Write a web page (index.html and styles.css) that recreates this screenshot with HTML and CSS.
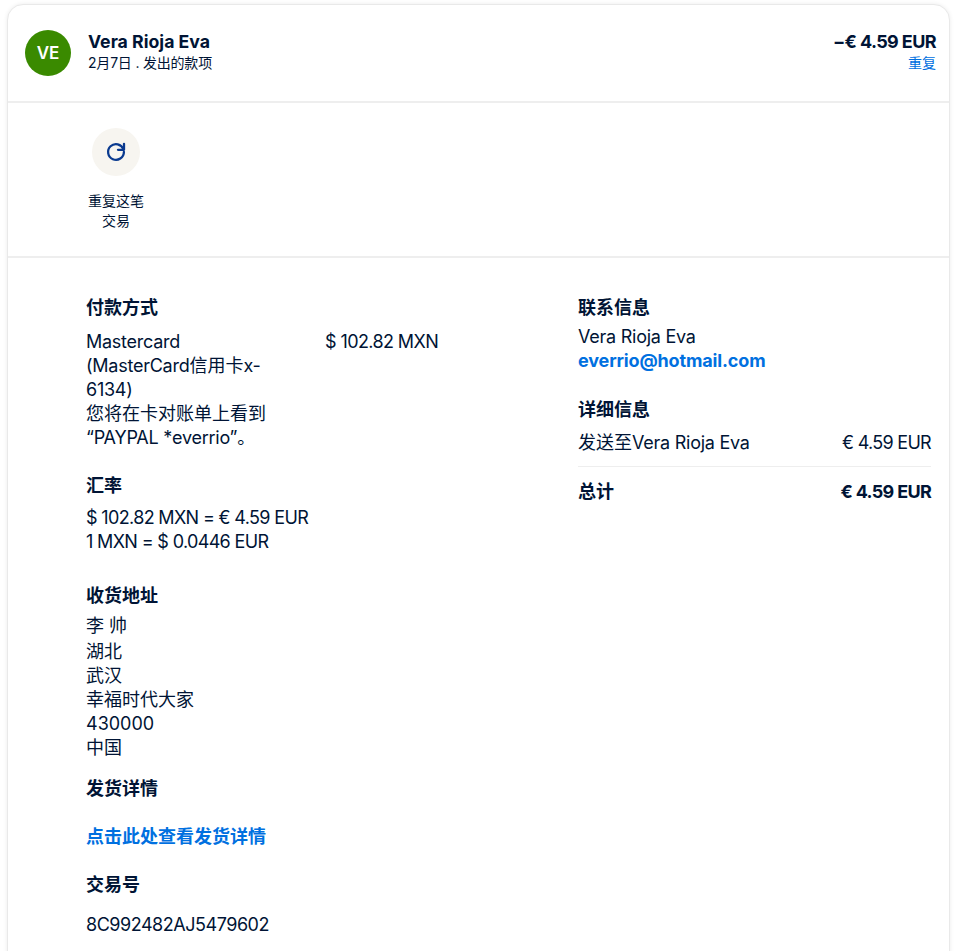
FILE: index.html
```html
<!DOCTYPE html>
<html lang="zh-CN">
<head>
<meta charset="utf-8">
<title>Vera Rioja Eva</title>
<link rel="stylesheet" href="styles.css">
</head>
<body>
<main class="card">
  <header class="head">
    <div class="avatar">VE</div>
    <div class="who">
      <div class="name">Vera Rioja Eva</div>
      <div class="sub">2月7日 . 发出的款项</div>
    </div>
    <div class="sum">
      <div class="total">−€ 4.59 EUR</div>
      <a class="repeat" href="#">重复</a>
    </div>
  </header>
  <section class="actions">
    <a class="action" href="#">
      <span class="action-icon">
        <svg width="24" height="24" viewBox="0 0 24 24" fill="none" stroke="#0a3a8f" stroke-width="2.3" stroke-linecap="round" stroke-linejoin="round"><path d="M19.4 9.2A7.9 7.9 0 1 0 19.9 12"/><path d="M20 3.8v6h-6"/></svg>
      </span>
      <span class="action-label">重复这笔<br>交易</span>
    </a>
  </section>
  <section class="details">
    <div class="col-left">
      <h3 class="title">付款方式</h3>
      <div class="pay-row">
        <div class="pay-text"><span class="tight">Mastercard</span><br><span class="tight">(MasterCard</span>信用卡<span class="tight">x-</span><br><span class="tight">6134)</span><br>您将在卡对账单上看到<br><span class="tight">“PAYPAL *everrio”</span>。</div>
        <div class="num">$ 102.82 MXN</div>
      </div>
      <h3 class="title rate-title">汇率</h3>
      <div class="rate num">$ 102.82 MXN = € 4.59 EUR<br>1 MXN = $ 0.0446 EUR</div>
      <h3 class="title addr-title">收货地址</h3>
      <div class="addr-name">李 帅</div>
      <div class="addr">湖北<br>武汉<br>幸福时代大家<br>430000<br>中国</div>
      <h3 class="title ship-title">发货详情</h3>
      <a class="link ship-link" href="#">点击此处查看发货详情</a>
      <h3 class="title txn-title">交易号</h3>
      <div class="txn">8C992482AJ5479602</div>
    </div>
    <div class="col-right">
      <h3 class="title">联系信息</h3>
      <div class="contact"><span class="tight">Vera Rioja Eva</span><br><a class="link email" href="#">everrio@hotmail.com</a></div>
      <h3 class="title detail-title">详细信息</h3>
      <div class="line">
        <span>发送至<span class="tight">Vera Rioja Eva</span></span>
        <span class="amount">€ 4.59 EUR</span>
      </div>
      <div class="line line-total">
        <span>总计</span>
        <span class="amount">€ 4.59 EUR</span>
      </div>
    </div>
  </section>
</main>
</body>
</html>
```

FILE: styles.css
```css
* { box-sizing: border-box; }
html, body { margin: 0; height: 951px; overflow: hidden; background: #fff; }
body {
  padding: 4px 7px 0 7px;
  color: #001435;
  font-family: Inter, "Noto Sans CJK SC", sans-serif;
  font-size: 18px;
  line-height: 24px;
}
a { text-decoration: none; }
.card {
  height: 1100px;
  border: 1px solid #e9e9e9;
  border-radius: 16px;
  box-shadow: 0 0 4px rgba(0, 0, 0, 0.08);
  background: #fff;
}
.head {
  display: flex;
  align-items: flex-start;
  height: 98px;
  padding: 25px 13px 0 17px;
  border-bottom: 2px solid #eeeeee;
}
.avatar {
  width: 46px;
  height: 46px;
  border-radius: 50%;
  background: #3a8a00;
  color: #fff;
  font-size: 17px;
  font-weight: 600;
  line-height: 46px;
  text-align: center;
}
.who { margin-left: 17px; flex: 1; }
.name { font-size: 17.7px; font-weight: 700; line-height: 24px; }
.sub { font-size: 14px; line-height: 18px; letter-spacing: -0.2px; }
.sum { text-align: right; }
.total { font-size: 18px; font-weight: 700; line-height: 24px; letter-spacing: -0.6px; }
.repeat { display: block; color: #0070e0; font-size: 14px; line-height: 18px; }
.actions {
  height: 155px;
  padding: 25px 0 0 72px;
  border-bottom: 2px solid #eeeeee;
}
.action {
  display: flex;
  flex-direction: column;
  align-items: center;
  width: 72px;
  color: #001435;
}
.action-icon {
  display: flex;
  align-items: center;
  justify-content: center;
  width: 48px;
  height: 48px;
  border-radius: 50%;
  background: #f7f5f0;
}
.action-label {
  margin-top: 15px;
  font-size: 14px;
  line-height: 20px;
  text-align: center;
}
.details {
  display: flex;
  padding: 36px 18px 0 78px;
}
.col-left { width: 492px; }
.col-right { flex: 1; }
.title { margin: 0; font-size: 18px; font-weight: 700; line-height: 28px; }
.tight { letter-spacing: -0.25px; }
.num { letter-spacing: -0.6px; }
.rate { letter-spacing: -0.65px; }
.amount { letter-spacing: -0.7px; }
.email { letter-spacing: -0.15px; }
.pay-row { display: flex; margin-top: 8px; }
.pay-text { width: 239px; }
.rate-title { margin-top: 22px; }
.rate { margin-top: 6px; }
.addr-title { margin-top: 28px; }
.addr-name { margin-top: 3px; line-height: 26px; }
.addr { margin-top: 1px; }
.ship-title { margin-top: 15px; }
.link { color: #0070e0; font-weight: 700; }
.ship-link { display: block; margin-top: 20px; line-height: 28px; }
.txn-title { margin-top: 20px; }
.txn { margin-top: 14px; letter-spacing: -0.47px; }
.contact { margin-top: 3px; }
.detail-title { margin-top: 23px; }
.line { display: flex; justify-content: space-between; margin-top: 7px; padding-bottom: 11px; border-bottom: 1px solid #eeeeee; }
.line-total { margin-top: 0; padding: 13px 0 0; border-bottom: 0; font-weight: 700; }
```
